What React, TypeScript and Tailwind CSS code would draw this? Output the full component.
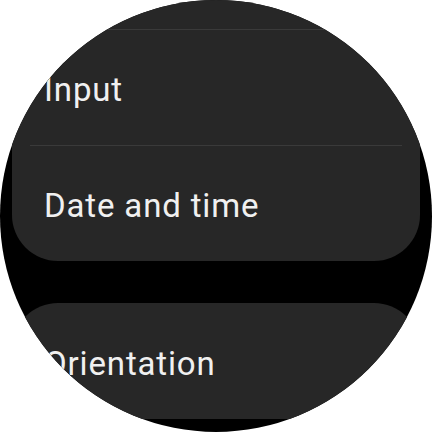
import React from "react";

function Row({ label, h = "h-[115px]" }: { label: string; h?: string }) {
  return (
    <div className={`${h} flex items-center pl-[32px] pr-[32px] pt-[4px]`}>
      <span className="text-[33px] leading-none tracking-[0.85px] text-[#f0f0f0]">{label}</span>
    </div>
  );
}

function Divider() {
  return <div className="mx-[18px] h-px bg-[#3a3a3a]" />;
}

export default function App() {
  return (
    <div
      className="w-[432px] h-[432px] bg-white"
      style={{ fontFamily: "Roboto, 'Noto Sans', sans-serif" }}
    >
      <div className="w-[432px] h-[432px] rounded-full overflow-hidden bg-black">
        <div className="flex flex-col px-[12px] gap-[42px]">
          <div className="bg-[#272727] rounded-b-[46px] flex flex-col">
            <div className="h-[29px]" />
            <div className="h-px bg-[#3a3a3a]" />
            <Row label="Input" />
            <Divider />
            <Row label="Date and time" />
          </div>
          <div className="bg-[#272727] rounded-[46px] flex flex-col">
            <Row label="Orientation" h="h-[116px]" />
          </div>
        </div>
      </div>
    </div>
  );
}
